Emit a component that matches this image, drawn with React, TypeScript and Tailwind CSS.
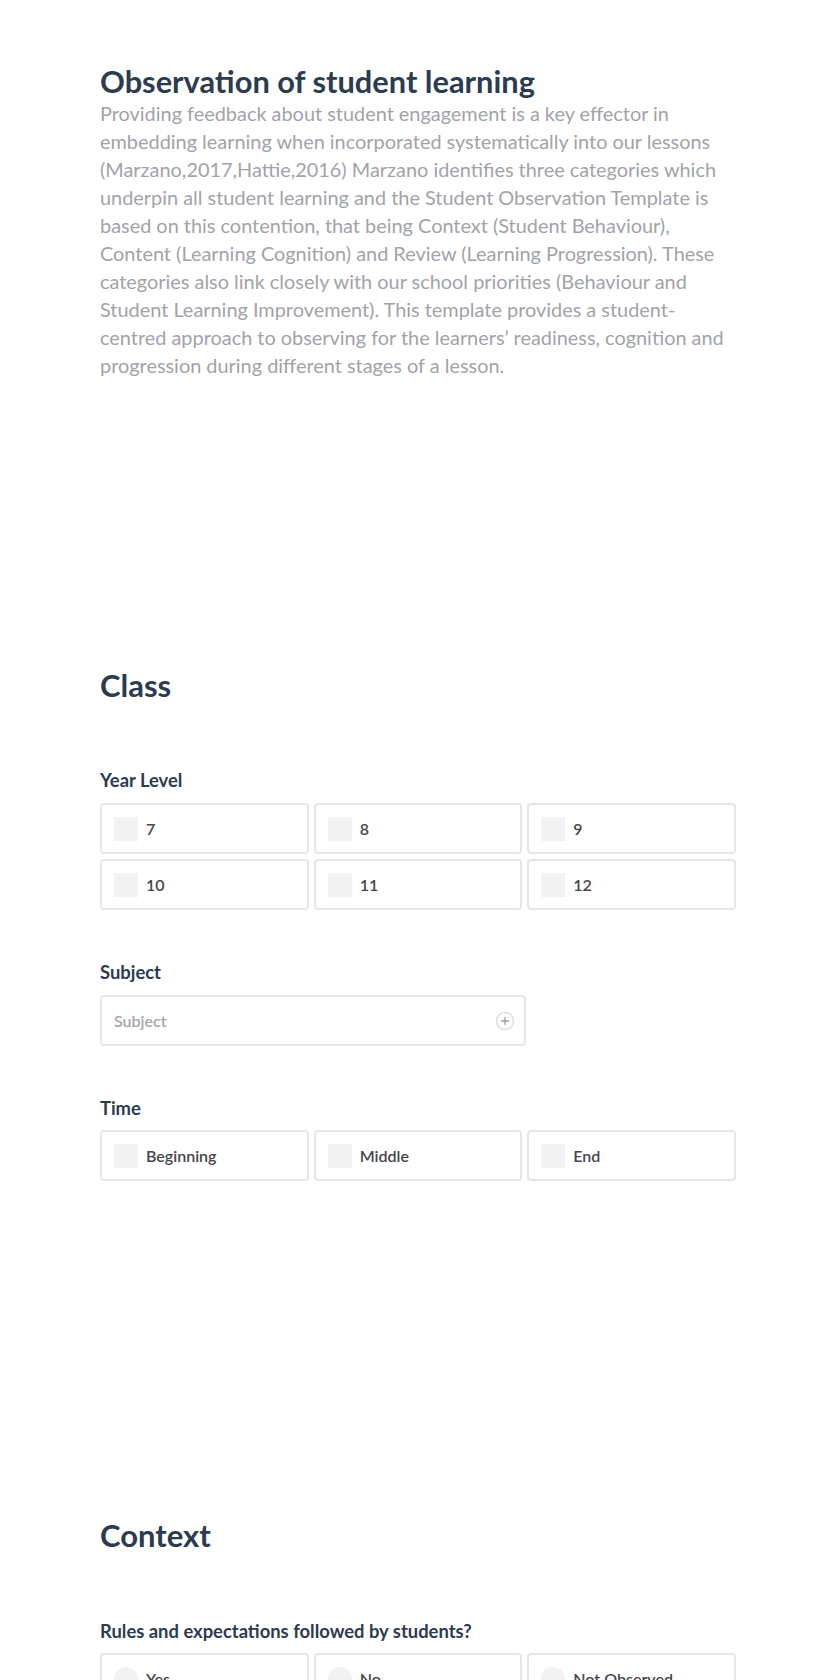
import React from "react";

const FONT = { fontFamily: "Lato, 'Open Sans', sans-serif" };

const INTRO =
  "Providing feedback about student engagement is a key effector in embedding learning when incorporated systematically into our lessons (Marzano,2017,Hattie,2016) Marzano identifies three categories which underpin all student learning and the Student Observation Template is based on this contention, that being Context (Student Behaviour), Content (Learning Cognition) and Review (Learning Progression). These categories also link closely with our school priorities (Behaviour and Student Learning Improvement). This template provides a student-centred approach to observing for the learners\u2019 readiness, cognition and progression during different stages of a lesson.";

function Choice({ label, round }: { label: string; round?: boolean }) {
  return (
    <label className="flex h-[51px] items-center gap-[8px] rounded-[4px] border-2 border-[#e6e6e6] bg-white pl-[12px]">
      <span className={`h-[24px] w-[24px] shrink-0 bg-[#f2f2f2] ${round ? "rounded-full" : ""}`} />
      <span className="text-[16px] font-semibold text-[#45454d]">{label}</span>
    </label>
  );
}

function FieldLabel({ children, className }: { children: React.ReactNode; className?: string }) {
  return <div className={`text-[18.4px] font-bold leading-[20px] text-[#2b3b50] ${className ?? ""}`}>{children}</div>;
}

export default function App() {
  return (
    <div className="min-h-[1680px] bg-white" style={FONT}>
      <div className="ml-[100px] w-[636px] pt-[65px]">
        <h1 className="text-[30.8px] font-bold leading-[34px] text-[#2b3b50]">Observation of student learning</h1>
        <p className="text-[19.9px] leading-[28px] text-[#a2a2aa]">{INTRO}</p>

        <section className="mt-[288px]">
          <h2 className="text-[31px] font-bold leading-[36px] text-[#2b3b50]">Class</h2>

          <FieldLabel className="mt-[67px]">Year Level</FieldLabel>
          <div className="mt-[13px] grid grid-cols-3 gap-[5px]">
            {["7", "8", "9", "10", "11", "12"].map((y) => (
              <Choice key={y} label={y} />
            ))}
          </div>

          <FieldLabel className="mt-[52px]">Subject</FieldLabel>
          <div className="mt-[13px] flex h-[51px] w-[426px] items-center justify-between rounded-[4px] border-2 border-[#e6e6e6] pl-[12px] pr-[9px]">
            <span className="text-[16px] font-semibold text-[#a5a5ad]">Subject</span>
            <svg width="20" height="20" viewBox="0 0 20 20" fill="none">
              <circle cx="10" cy="10" r="8.5" stroke="#dcdcdc" strokeWidth="1.5" />
              <path d="M10 6.5v7M6.5 10h7" stroke="#9a9aa2" strokeWidth="1.3" strokeLinecap="round" />
            </svg>
          </div>

          <FieldLabel className="mt-[52px]">Time</FieldLabel>
          <div className="mt-[12px] grid grid-cols-3 gap-[5px]">
            {["Beginning", "Middle", "End"].map((t) => (
              <Choice key={t} label={t} />
            ))}
          </div>
        </section>

        <section className="mt-[336px] pb-[40px]">
          <h2 className="text-[31px] font-bold leading-[36px] text-[#2b3b50]">Context</h2>
          <FieldLabel className="mt-[68px]">Rules and expectations followed by students?</FieldLabel>
          <div className="mt-[12px] grid grid-cols-3 gap-[5px]">
            {["Yes", "No", "Not Observed"].map((t) => (
              <Choice key={t} label={t} round />
            ))}
          </div>
        </section>
      </div>
    </div>
  );
}
